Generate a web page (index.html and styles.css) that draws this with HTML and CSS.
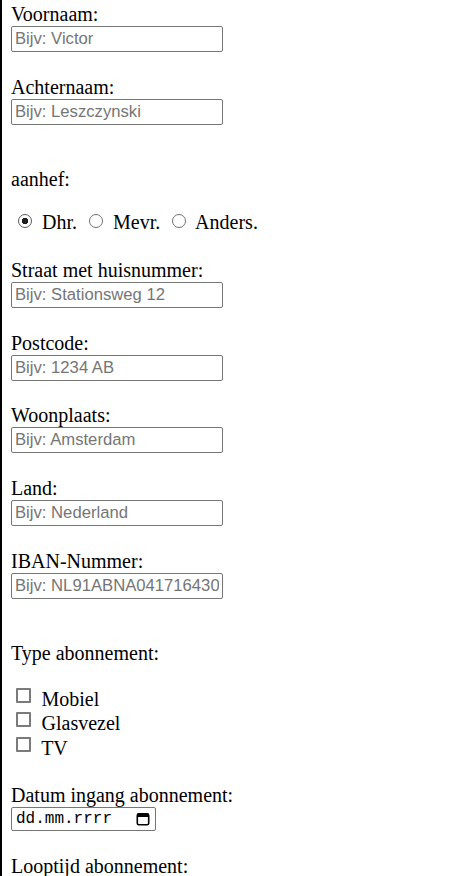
FILE: index.html
```html
<!DOCTYPE html>
<html lang="nl">
<head>
<meta charset="utf-8">
<title>Abonnement aanvragen</title>
<link rel="stylesheet" href="styles.css">
</head>
<body>
<form class="form">
  <div class="field">
    <label class="field-label" for="voornaam">Voornaam:</label>
    <input class="text-input" id="voornaam" type="text" placeholder="Bijv: Victor">
  </div>
  <div class="field">
    <label class="field-label" for="achternaam">Achternaam:</label>
    <input class="text-input" id="achternaam" type="text" placeholder="Bijv: Leszczynski">
  </div>

  <p class="group-title">aanhef:</p>
  <div class="radio-row">
    <label class="option"><input class="radio" type="radio" name="aanhef" checked> Dhr.</label>
    <label class="option"><input class="radio" type="radio" name="aanhef"> Mevr.</label>
    <label class="option"><input class="radio" type="radio" name="aanhef"> Anders.</label>
  </div>

  <div class="field">
    <label class="field-label" for="straat">Straat met huisnummer:</label>
    <input class="text-input" id="straat" type="text" placeholder="Bijv: Stationsweg 12">
  </div>
  <div class="field">
    <label class="field-label" for="postcode">Postcode:</label>
    <input class="text-input" id="postcode" type="text" placeholder="Bijv: 1234 AB">
  </div>
  <div class="field">
    <label class="field-label" for="woonplaats">Woonplaats:</label>
    <input class="text-input" id="woonplaats" type="text" placeholder="Bijv: Amsterdam">
  </div>
  <div class="field">
    <label class="field-label" for="land">Land:</label>
    <input class="text-input" id="land" type="text" placeholder="Bijv: Nederland">
  </div>
  <div class="field">
    <label class="field-label" for="iban">IBAN-Nummer:</label>
    <input class="text-input" id="iban" type="text" placeholder="Bijv: NL91ABNA0417164300">
  </div>

  <p class="group-title">Type abonnement:</p>
  <div class="checklist">
    <label class="check-row"><input class="checkbox" type="checkbox" name="type" value="mobiel"> Mobiel</label>
    <label class="check-row"><input class="checkbox" type="checkbox" name="type" value="glasvezel"> Glasvezel</label>
    <label class="check-row"><input class="checkbox" type="checkbox" name="type" value="tv"> TV</label>
  </div>

  <div class="field">
    <span class="field-label">Datum ingang abonnement:</span>
    <div class="date-box">
      <span class="date-text">dd.mm.rrrr</span>
      <svg class="date-icon" width="14" height="14" viewBox="0 0 14 14" aria-hidden="true">
        <rect x="1.3" y="1.8" width="11.4" height="11" rx="1.6" fill="none" stroke="#000" stroke-width="1.6"/>
        <rect x="1.3" y="1.8" width="11.4" height="3.2" fill="#000"/>
      </svg>
    </div>
  </div>

  <div class="field">
    <label class="field-label" for="looptijd">Looptijd abonnement:</label>
    <select class="select" id="looptijd">
      <option>1 jaar</option>
      <option>2 jaar</option>
    </select>
  </div>
</form>
</body>
</html>
```

FILE: styles.css
```css
html {
  background: #fff;
}

body {
  margin: 0;
  min-height: 100vh;
  box-sizing: border-box;
  border-left: 2px solid #000;
  padding: 3px 0 0 9px;
  font: 20px/23px "Liberation Serif", "Times New Roman", serif;
  color: #000;
}

.form {
  display: flex;
  flex-direction: column;
  align-items: flex-start;
  margin: 0;
}

.field {
  margin-bottom: 23.7px;
}

.field-label {
  display: block;
  height: 23px;
}

.text-input {
  display: block;
  box-sizing: border-box;
  width: 212px;
  height: 26px;
  margin: 0;
  padding: 0 3px;
  border: 1px solid #767676;
  border-radius: 2px;
  background: #fff;
  font: 16.67px "Liberation Sans", Arial, sans-serif;
  color: #000;
}

.text-input::placeholder {
  color: #757575;
  opacity: 1;
}

.group-title {
  margin: 20px 0 0;
  height: 23px;
}

.radio-row {
  margin: 20px 0 24px;
  height: 23.5px;
  white-space: nowrap;
}

.option {
  display: inline;
}

.radio {
  appearance: none;
  -webkit-appearance: none;
  display: inline-block;
  box-sizing: border-box;
  width: 14px;
  height: 14px;
  margin: 0 5px 1.8px 7px;
  vertical-align: baseline;
  border: 1.4px solid #707070;
  border-radius: 50%;
  background: #fff;
}

.radio:checked {
  border-color: #5a5a5a;
  background: radial-gradient(circle, #1e1e1e 0 2.9px, #fff 3.5px);
}

.checklist {
  margin: 21.5px 0 23.5px;
}

.check-row {
  display: block;
  height: 24.5px;
  line-height: 24.5px;
}

.checkbox {
  appearance: none;
  -webkit-appearance: none;
  display: inline-block;
  box-sizing: border-box;
  width: 15px;
  height: 15px;
  margin: 0 5.5px 3.2px 5px;
  vertical-align: baseline;
  border: 2px solid #7a7a7a;
  border-radius: 1px;
  background: #fff;
}

.date-box {
  display: flex;
  align-items: center;
  justify-content: space-between;
  box-sizing: border-box;
  width: 145px;
  height: 24px;
  padding: 0 5px 0 4px;
  border: 1px solid #767676;
  border-radius: 2px;
  font: 16px/1 "Liberation Mono", "DejaVu Sans Mono", monospace;
}

.date-icon {
  display: block;
  flex: none;
}

.select {
  display: block;
  height: 26px;
  font: 16.67px "Liberation Sans", Arial, sans-serif;
}
```
